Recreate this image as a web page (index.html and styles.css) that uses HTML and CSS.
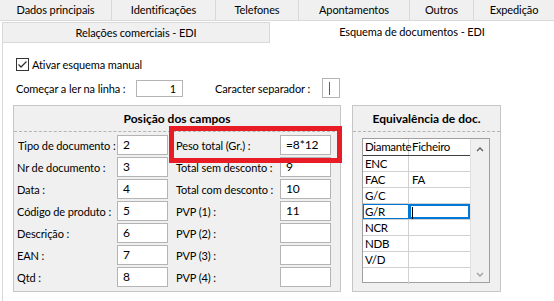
FILE: index.html
```html
<!DOCTYPE html>
<html lang="pt">
<head>
    <meta charset="UTF-8">
    <meta name="viewport" content="width=device-width, initial-scale=1.0">
    <title>Esquema de documentos - EDI</title>
    <link rel="stylesheet" href="styles.css">
</head>
<body>
    <div class="window">
        <div class="tabs-top">
            <div class="tab w1">Dados principais</div>
            <div class="tab w2">Identificações</div>
            <div class="tab w3">Telefones</div>
            <div class="tab w4">Apontamentos</div>
            <div class="tab w5">Outros</div>
            <div class="tab w6">Expedição</div>
        </div>
        <div class="tabs-second">
            <div class="tab2">Relações comerciais - EDI</div>
            <div class="tab2 active">Esquema de documentos - EDI</div>
        </div>

        <div class="panel">
            <label class="check-row">
                <span class="checkbox">
                    <svg width="13" height="13" viewBox="0 0 13 13">
                        <path d="M2.5 6.5 L5 9 L10.5 3.5" fill="none" stroke="#333" stroke-width="1.3"/>
                    </svg>
                </span>
                Ativar esquema manual
            </label>

            <div class="start-row">
                <span class="start-label">Começar a ler na linha :</span>
                <div class="field start-field">1</div>
                <span class="sep-label">Caracter separador :</span>
                <div class="field sep-field"><span class="caret"></span></div>
            </div>

            <div class="groups">
                <div class="group positions">
                    <div class="group-title">Posição dos campos</div>
                    <div class="pos-grid">
                        <div class="pos-col">
                            <div class="pos-row"><span class="lbl first">Tipo de documento :</span><div class="field val">2</div></div>
                            <div class="pos-row"><span class="lbl">Nr de documento :</span><div class="field val">3</div></div>
                            <div class="pos-row"><span class="lbl">Data :</span><div class="field val">4</div></div>
                            <div class="pos-row"><span class="lbl">Código de produto :</span><div class="field val">5</div></div>
                            <div class="pos-row"><span class="lbl">Descrição :</span><div class="field val">6</div></div>
                            <div class="pos-row"><span class="lbl">EAN :</span><div class="field val">7</div></div>
                            <div class="pos-row"><span class="lbl">Qtd :</span><div class="field val">8</div></div>
                        </div>
                        <div class="pos-col right">
                            <div class="pos-row"><span class="lbl">Peso total (Gr.) :</span><div class="field val">=8*12</div></div>
                            <div class="pos-row"><span class="lbl">Total sem desconto :</span><div class="field val">9</div></div>
                            <div class="pos-row"><span class="lbl">Total com desconto :</span><div class="field val">10</div></div>
                            <div class="pos-row"><span class="lbl">PVP (1) :</span><div class="field val">11</div></div>
                            <div class="pos-row"><span class="lbl">PVP (2) :</span><div class="field val"></div></div>
                            <div class="pos-row"><span class="lbl">PVP (3) :</span><div class="field val"></div></div>
                            <div class="pos-row"><span class="lbl">PVP (4) :</span><div class="field val"></div></div>
                        </div>
                    </div>
                    <div class="highlight"></div>
                </div>

                <div class="group equiv">
                    <div class="group-title">Equivalência de doc.</div>
                    <div class="table-box">
                        <div class="table">
                            <div class="trow head"><div class="c1">Diamante</div><div class="c2">Ficheiro</div></div>
                            <div class="trow"><div class="c1">ENC</div><div class="c2"></div></div>
                            <div class="trow"><div class="c1">FAC</div><div class="c2">FA</div></div>
                            <div class="trow"><div class="c1">G/C</div><div class="c2"></div></div>
                            <div class="trow selected"><div class="c1">G/R</div><div class="c2"><span class="caret dark"></span></div></div>
                            <div class="trow"><div class="c1">NCR</div><div class="c2"></div></div>
                            <div class="trow"><div class="c1">NDB</div><div class="c2"></div></div>
                            <div class="trow"><div class="c1">V/D</div><div class="c2"></div></div>
                            <div class="trow"><div class="c1"></div><div class="c2"></div></div>
                        </div>
                        <div class="scrollbar">
                            <svg width="18" height="10" viewBox="0 0 18 10"><path d="M6 7 L9 4 L12 7" fill="none" stroke="#606060" stroke-width="1.4"/></svg>
                            <svg width="18" height="10" viewBox="0 0 18 10"><path d="M6 3 L9 6 L12 3" fill="none" stroke="#a0a0a0" stroke-width="1.4"/></svg>
                        </div>
                    </div>
                </div>
            </div>
        </div>
    </div>
</body>
</html>
```

FILE: styles.css
```css
body {
    margin: 0;
    font-family: Lato, "Open Sans", Arial, sans-serif;
    font-size: 11px;
    letter-spacing: -0.1px;
    color: #000;
    background: #fff;
    white-space: nowrap;
}

.window {
    width: 554px;
    height: 301px;
    overflow: hidden;
    background: #fff;
}

/* tabs */
.tabs-top {
    display: flex;
    height: 21px;
    background: #f0f0f0;
    border-bottom: 1px solid #d9d9d9;
    box-sizing: border-box;
}

.tab {
    box-sizing: border-box;
    border-right: 1px solid #d9d9d9;
    text-align: center;
    line-height: 20px;
}

.w1 { width: 112px; }
.w2 { width: 104px; }
.w3 { width: 83px; }
.w4 { width: 111px; }
.w5 { width: 64px; }
.w6 { width: 80px; border-right: none; }

.tabs-second {
    display: flex;
    height: 22px;
    padding-left: 2px;
}

.tab2 {
    box-sizing: border-box;
    width: 268px;
    margin-top: 1px;
    border: 1px solid #d9d9d9;
    background: #f0f0f0;
    text-align: center;
    line-height: 19px;
}

.tab2.active {
    flex: 1;
    margin-top: 0;
    border: none;
    background: #fff;
    line-height: 21px;
}

.panel {
    margin-left: 2px;
    border-left: 1px solid #d9d9d9;
    height: 260px;
    padding: 14px 0 0 13px;
    box-sizing: border-box;
}

.check-row {
    display: flex;
    align-items: center;
    gap: 3px;
    height: 14px;
}

.checkbox {
    width: 13px;
    height: 13px;
    box-sizing: border-box;
    border: 1px solid #333;
    background: #fff;
    display: flex;
}

.checkbox svg {
    margin: -1px;
}

.start-row {
    display: flex;
    align-items: center;
    margin-top: 7px;
    height: 20px;
}

.start-label {
    width: 120px;
}

.field {
    box-sizing: border-box;
    border: 1px solid #b4b4b4;
    background: #fff;
}

.start-field {
    width: 47px;
    height: 17px;
    text-align: right;
    padding-right: 6px;
    line-height: 15px;
}

.sep-label {
    width: 107px;
    margin-left: 32px;
}

.sep-field {
    width: 18px;
    height: 20px;
    padding: 3px 0 0 6px;
}

.caret {
    display: block;
    width: 1px;
    height: 13px;
    background: #0078d7;
}

.caret.dark {
    background: #000;
    height: 12px;
}

/* groups */
.groups {
    display: flex;
    gap: 11px;
    margin-top: 7px;
    margin-left: -3px;
}

.group {
    position: relative;
    box-sizing: border-box;
    height: 187px;
    background: #f0f0f0;
    border: 1px solid #c6c6c6;
}

.positions {
    width: 328px;
}

.equiv {
    width: 149px;
}

.group-title {
    height: 25px;
    border-bottom: 1px dashed #b4b4b4;
    text-align: center;
    font-size: 12px;
    font-weight: bold;
    letter-spacing: 0;
    line-height: 25px;
}

.pos-grid {
    display: flex;
    padding: 3px 0 0 3px;
}

.pos-col {
    display: flex;
    flex-direction: column;
    gap: 2px;
}

.pos-col.right {
    margin-left: 8px;
}

.pos-row {
    display: flex;
    align-items: center;
    height: 20px;
}

.lbl {
    width: 100px;
}

.lbl.first {
    margin-left: 1px;
    width: 99px;
}

.right .lbl {
    width: 104px;
}

.val {
    width: 51px;
    height: 20px;
    padding-left: 5px;
    line-height: 18px;
    font-size: 12px;
}

.highlight {
    position: absolute;
    left: 155px;
    top: 20px;
    width: 173px;
    height: 37px;
    box-sizing: border-box;
    border: 5px solid #e81c24;
}

/* equivalence table */
.table-box {
    display: flex;
    margin: 6px 0 0 9px;
    width: 128px;
    height: 145px;
    box-sizing: border-box;
    border: 1px solid #a0a0a0;
    background: #fff;
}

.table {
    width: 108px;
    font-size: 11.5px;
    letter-spacing: -0.3px;
}

.trow {
    display: flex;
    height: 16px;
    box-sizing: border-box;
    border-bottom: 1px solid #d0d0d0;
}

.trow.head {
    height: 17px;
    border-bottom: 1px solid #404040;
}

.trow:last-child {
    border-bottom: none;
}

.c1 {
    width: 46px;
    box-sizing: border-box;
    border-right: 1px solid #d0d0d0;
    padding-left: 2px;
    line-height: 15px;
}

.c2 {
    flex: 1;
    padding-left: 3px;
    line-height: 15px;
}

.trow.selected .c1 {
    border: 1px solid #0078d7;
    line-height: 13px;
    padding-left: 1px;
}

.trow.selected .c2 {
    border: 2px solid #0078d7;
    padding: 1px 0 0 1px;
}

.scrollbar {
    flex: 1;
    background: #f0f0f0;
    border-left: 1px solid #e0e0e0;
    display: flex;
    flex-direction: column;
    justify-content: space-between;
    padding: 5px 0 2px;
}
```
